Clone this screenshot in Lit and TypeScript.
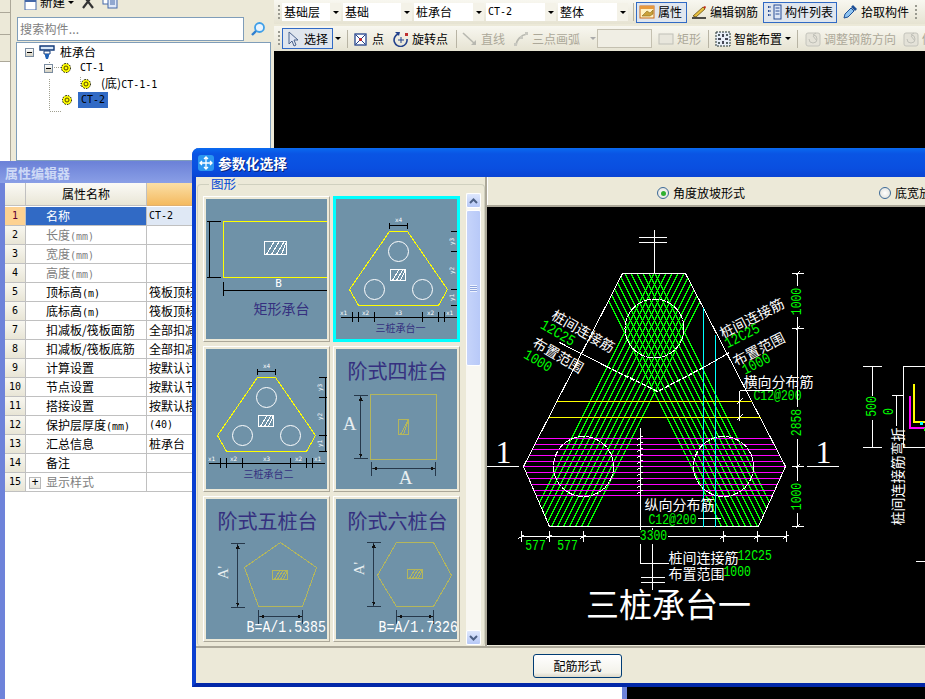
import { LitElement, html, svg, css } from 'lit';
import { customElement } from 'lit/decorators.js';

const line = (x1: number, y1: number, x2: number, y2: number, c = '#fff') =>
  svg`<line x1=${x1} y1=${y1} x2=${x2} y2=${y2} stroke=${c} />`;

// the CAD figures use a tall, narrow face, so mono text gets squeezed sideways
const label = (x: number, y: number, t: string, cls: string, size: number, rot = 0, anchor = 'middle') => {
  const narrow = cls === 'g' || cls === 'formula';
  const squeeze = narrow ? ' scale(.83 1)' : '';
  return svg`<text transform="translate(${x} ${y}) rotate(${rot})${squeeze}" class=${cls} font-size=${narrow ? size * 1.2 : size} text-anchor=${anchor} dominant-baseline="central">${t}</text>`;
};

const hatch = (x: number, y: number, w: number, h: number, c: string, step = 5) => {
  const out = [];
  for (let i = 2; i < w - 2; i += step) {
    out.push(line(x + i, y + h, Math.min(x + i + h * 0.6, x + w), y, c));
  }
  return svg`<rect x=${x} y=${y} width=${w} height=${h} fill="none" stroke=${c} />${out}`;
};

const vdim = (x: number, y1: number, y2: number, half = 7) => {
  const c = '#26384a';
  return svg`${line(x, y1, x, y2, c)}${line(x - half, y1, x + half, y1, c)}${line(x - half, y2, x + half, y2, c)}
    <polygon points="${x},${y1 + 1} ${x - 2},${y1 + 5} ${x + 2},${y1 + 5}" fill="#111" />
    <polygon points="${x},${y2 - 1} ${x - 2},${y2 - 5} ${x + 2},${y2 - 5}" fill="#111" />`;
};

const hdim = (y: number, x1: number, x2: number, half = 7) => {
  const c = '#26384a';
  return svg`${line(x1, y, x2, y, c)}${line(x1, y - half, x1, y + half, c)}${line(x2, y - half, x2, y + half, c)}
    <polygon points="${x1 + 1},${y} ${x1 + 5},${y - 2} ${x1 + 5},${y + 2}" fill="#111" />
    <polygon points="${x2 - 1},${y} ${x2 - 5},${y - 2} ${x2 - 5},${y + 2}" fill="#111" />`;
};

const OLIVE = '#b4b65c';

function threePile(name: string, dx: number, dy: number) {
  const k = '#000';
  const ticks = [16, 22, 38, 86, 102, 108];
  const names: [number, string][] = [[7, 'x1'], [29, 'x2'], [62, 'x3'], [94, 'x2'], [113, 'x1']];
  return svg`<g transform="translate(${dx} ${dy})">
    <polygon points="53,32 71,32 111,90 102,106 22,106 13,90" fill="none" stroke="#ff0" />
    <circle cx="62" cy="52" r="10" fill="none" stroke="#fff" />
    <circle cx="38" cy="90" r="10" fill="none" stroke="#fff" />
    <circle cx="86" cy="90" r="10" fill="none" stroke="#fff" />
    ${hatch(54, 70, 15, 11, '#fff', 4)}
    ${line(53, 26, 71, 26, k)}${line(53, 23, 53, 29, k)}${line(71, 23, 71, 29, k)}
    ${label(62, 20, 'x4', 'tiny', 6)}
    ${line(121, 32, 121, 106, k)}
    ${[32, 52, 90, 106].map(y => line(114, y, 122, y, k))}
    ${label(115, 42, 'y3', 'tiny', 6, -90)}${label(115, 71, 'y2', 'tiny', 6, -90)}${label(115, 98, 'y1', 'tiny', 6, -90)}
    ${line(4, 118, 120, 118, k)}
    ${ticks.map(x => line(x, 112, x, 122, k))}
    ${names.map(([x, t]) => label(x, 113, t, 'tiny', 6))}
    ${label(64, 128, name, 'ink', 10)}
  </g>`;
}

const TILES = [
  {
    sel: false,
    art: svg`
      <polyline points="122,22 17,22 17,78 122,78" fill="none" stroke="#ff0" />
      ${line(3, 22, 3, 78, '#000')}${line(0, 22, 14, 22, '#000')}${line(0, 78, 14, 78, '#000')}
      ${hatch(58, 42, 22, 13, '#fff')}
      ${label(72, 84, 'B', 'tiny', 11)}
      ${line(17, 91, 122, 91, '#000')}${line(17, 82, 17, 96, '#000')}
      ${label(75, 108, '矩形承台', 'ink', 14)}`,
  },
  { sel: true, art: threePile('三桩承台一', 0, 0) },
  { sel: false, art: threePile('三桩承台二', -2, -4) },
  {
    sel: false,
    art: svg`
      ${label(61, 21, '阶式四桩台', 'ink', 20)}
      <rect x="34" y="45" width="66" height="65" fill="none" stroke=${OLIVE} />
      ${hatch(62, 70, 10, 15, OLIVE, 3)}
      ${vdim(24, 46, 109)}${hdim(119, 35, 99)}
      ${label(13, 74, 'A', 'serif', 19)}${label(69, 128, 'A', 'serif', 19)}`,
  },
  {
    sel: false,
    art: svg`
      ${label(61, 21, '阶式五桩台', 'ink', 20)}
      <polygon points="74,43 110,68 96,107 52,107 38,68" fill="none" stroke=${OLIVE} />
      ${hatch(66, 71, 15, 9, OLIVE, 3)}
      ${vdim(31, 44, 108)}${hdim(117, 52, 96)}
      ${label(16, 73, "A'", 'serif', 15, -90)}
      ${label(40, 128, 'B=A/1.5385', 'formula', 13.3, 0, 'start')}`,
  },
  {
    sel: false,
    art: svg`
      ${label(61, 21, '阶式六桩台', 'ink', 20)}
      <polygon points="60,43 97,43 115,76 97,107 60,107 41,76" fill="none" stroke=${OLIVE} />
      ${hatch(71, 70, 15, 9, OLIVE, 3)}
      ${vdim(37, 43, 107)}${hdim(117, 60, 97)}
      ${label(22, 69, "A'", 'serif', 15, -90)}
      ${label(42, 128, 'B=A/1.7326', 'formula', 13.3, 0, 'start')}`,
  },
];

const ROWS: [string, string, boolean?, string?][] = [
  ['名称', 'CT-2'],
  ['长度', '', true, '(mm)'],
  ['宽度', '', true, '(mm)'],
  ['高度', '', true, '(mm)'],
  ['顶标高', '筏板顶标高', false, '(m)'],
  ['底标高', '筏板顶标高', false, '(m)'],
  ['扣减板/筏板面筋', '全部扣减'],
  ['扣减板/筏板底筋', '全部扣减'],
  ['计算设置', '按默认计算'],
  ['节点设置', '按默认节点'],
  ['搭接设置', '按默认搭接'],
  ['保护层厚度', '(40)', false, '(mm)'],
  ['汇总信息', '桩承台'],
  ['备注', ''],
  ['显示样式', '', true],
];

// small toolbar glyphs, all on a 16 box
const ICONS: Record<string, unknown> = {
  prop: svg`<rect x="1" y="2" width="14" height="12" fill="#fff3c4" stroke="#c96a1a" /><rect x="1" y="2" width="14" height="3" fill="#e89a3c" /><path d="M3 12l5-5 3 2 3-3v4l-3 2H3z" fill="#caa23a" stroke="#8a6a1a" stroke-width=".6" />`,
  edit: svg`<path d="M2 12L12 3l2 2L5 13z" fill="#e8c040" stroke="#665010" stroke-width=".8" /><path d="M12 3l2 2 1-2-1-1z" fill="#c03020" /><path d="M1 14h14" stroke="#222" stroke-width="1.6" />`,
  list: svg`<rect x="8" y="1" width="7" height="14" fill="#dce6f6" stroke="#2a4f96" /><path d="M9.500 4h4M9.500 7h4M9.500 10h4" stroke="#2a4f96" /><path d="M2 3h3M2 7h3M2 11h3" stroke="#2a4f96" stroke-width="2" stroke-dasharray="1.500 1" />`,
  pick: svg`<path d="M2 14l1-4 6-6 3 3-6 6z" fill="#8fc4f0" stroke="#1d4f96" /><path d="M9 3l2-2 4 4-2 2z" fill="#1d4f96" />`,
  arrow: svg`<path d="M4 1v12l3-3 2 5 2-1-2-5h4z" fill="#dfe6f4" stroke="#4c648c" />`,
  point: svg`<rect x="2" y="3" width="11" height="11" fill="#fff" stroke="#23428c" stroke-width="1.300" /><path d="M3 4l9 9M12 4l-9 9" stroke="#23428c" /><circle cx="7.500" cy="8.500" r="1.500" fill="#d02020" />`,
  rotate: svg`<path d="M14 8a6.500 6.500 0 1 1-9-5" fill="none" stroke="#23428c" stroke-width="1.600" /><path d="M2 1l5 0-1 4z" fill="#23428c" /><path d="M8 6v6M5 9h6" stroke="#23428c" /><rect x="12" y="2" width="3" height="3" fill="#c03030" />`,
  line: svg`<path d="M1 2l12 11" stroke="#b8b8b0" stroke-width="1.600" /><path d="M14 9v5H9z" fill="#b8b8b0" />`,
  arc: svg`<path d="M3 15C3 9 8 4 14 3" fill="none" stroke="#b8b8b0" stroke-width="1.600" /><rect x="1" y="12" width="3" height="3" fill="#c8c8c0" /><rect x="7" y="5" width="3" height="3" fill="#c8c8c0" /><rect x="12" y="1" width="3" height="3" fill="#c8c8c0" />`,
  rect: svg`<rect x="1" y="3" width="14" height="10" fill="#e8e6dc" stroke="#c0c0b8" />`,
  smart: svg`<rect x="1" y="1" width="14" height="14" fill="#e8eef8" stroke="#233" stroke-dasharray="2 1" /><path d="M8 3v3M8 10v3M3 8h3M10 8h3" stroke="#112" stroke-width="1.500" /><circle cx="4" cy="4" r="1" fill="#233" /><circle cx="12" cy="12" r="1" fill="#233" /><circle cx="12" cy="4" r="1" fill="#233" /><circle cx="4" cy="12" r="1" fill="#233" />`,
  adjust: svg`<rect x="1" y="2" width="14" height="13" rx="2" fill="#e4e2d8" stroke="#c4c4bc" /><path d="M4 8a4 4 0 1 0 4-4l3-2M8 5l4 5" fill="none" stroke="#c0c0b8" />`,
  newdoc: svg`<rect x="4" y="5" width="11" height="11" fill="#fff" stroke="#4468a8" /><rect x="4" y="5" width="11" height="3" fill="#4468a8" /><path d="M1 2l2 2 2-2" stroke="#e0a020" stroke-width="1.500" fill="none" />`,
  del: svg`<path d="M3 1l10 13M13 1L3 14" stroke="#333" stroke-width="2.200" />`,
  copy: svg`<rect x="1" y="0" width="9" height="10" fill="#fff" stroke="#4468a8" /><rect x="6" y="3" width="9" height="11" fill="#dfe8f8" stroke="#4468a8" /><path d="M8 6h5M8 8h5M8 10h5" stroke="#4468a8" />`,
};

const icon = (n: string) => html`<svg class="ico" viewBox="0 0 16 16" width="16" height="16">${ICONS[n]}</svg>`;

const gear = html`<svg class="gear" viewBox="0 0 12 12" width="12" height="12">
  <circle cx="6" cy="6" r="4.500" fill="#ff0" stroke="#000" stroke-dasharray="1.500 1.200" />
  <circle cx="6" cy="6" r="2" fill="none" stroke="#554400" />
</svg>`;

const expander = html`<span class="expander"></span>`;

type Tool = { i?: string; t?: string; w?: number; g?: number; on?: boolean; off?: boolean; kind?: string };

const ROW1: Tool[] = [
  { i: 'prop', t: '属性', w: 51, g: 2, on: true },
  { i: 'edit', t: '编辑钢筋', w: 70, g: 4 },
  { i: 'list', t: '构件列表', w: 74, g: 3, on: true },
  { i: 'pick', t: '拾取构件', w: 69 },
];

const ROW2: Tool[] = [
  { i: 'arrow', t: '选择', w: 51, on: true },
  { kind: 'drop', w: 10, g: 4 },
  { kind: 'sep', g: 3 },
  { i: 'point', t: '点', w: 35, g: 5 },
  { i: 'rotate', t: '旋转点', w: 58, g: 7 },
  { kind: 'sep', g: 3 },
  { i: 'line', t: '直线', w: 46, g: 5, off: true },
  { i: 'arc', t: '三点画弧', w: 78, off: true },
  { kind: 'drop-off', w: 8 },
  { kind: 'combo', w: 55, g: 4 },
  { i: 'rect', t: '矩形', w: 46, g: 6, off: true },
  { kind: 'sep', g: 4 },
  { i: 'smart', t: '智能布置', w: 70, g: 1 },
  { kind: 'drop', w: 8, g: 5 },
  { kind: 'sep', g: 5 },
  { i: 'adjust', t: '调整钢筋方向', w: 95, g: 3, off: true },
  { i: 'adjust', t: '修改', w: 50, off: true },
];

const COMBOS: [string, number][] = [['基础层', 59], ['基础', 69], ['桩承台', 70], ['CT-2', 70], ['整体', 70]];

function cadDrawing() {
  const hatchLines = [];
  for (let o = -32; o <= 32; o += 6) {
    const x = (y: number) => (y - 329) / 2 + o;
    hatchLines.push(line(654 + x(270), 270, 654 + x(530), 530, '#0f0'));
    hatchLines.push(line(654 - x(270), 270, 654 - x(530), 530, '#0f0'));
  }
  const hex = '622,274 685,274 785,467 758,527 549,527 523,467';
  const magenta = [439, 445, 450, 456, 462, 467, 473, 479, 485, 491, 496];
  const slashes = [];
  for (let y = 438; y <= 496; y += 6) slashes.push(line(637, y + 2, 643, y - 2));
  const bottom = [521, 549, 583, 723, 757, 786];
  const right = [274, 329, 467, 527];
  return svg`
    <defs><clipPath id="hex"><polygon points=${hex} /></clipPath></defs>
    <g clip-path="url(#hex)">
      ${hatchLines}
      ${magenta.map(y => line(520, y, 790, y, '#f0f'))}
    </g>
    <polygon points=${hex} fill="none" stroke="#fff" />
    <circle cx="654" cy="329" r="29.500" fill="none" stroke="#fff" stroke-dasharray="7 1" />
    <circle cx="583" cy="467" r="30" fill="none" stroke="#fff" stroke-dasharray="7 1" />
    <circle cx="723" cy="467" r="30" fill="none" stroke="#fff" stroke-dasharray="7 1" />
    ${line(556, 402, 751, 402, '#ff0')}${line(548, 418, 760, 418, '#ff0')}
    ${line(703, 308, 703, 527, '#0ff')}${line(715, 335, 715, 527, '#0ff')}

    ${line(654, 230, 654, 274)}${line(638, 238, 666, 238)}${line(638, 243, 666, 243)}
    ${line(559, 343, 606, 367)}${line(729, 353, 703, 368)}
    <polyline points="606,367 657,392 703,368" fill="none" stroke="#fff" stroke-width="1.400" stroke-dasharray="5 1.500" />

    ${label(583, 331, '桩间连接筋', 'w', 14, 30)}
    ${label(557, 334, '12C25', 'g', 12.500, 30)}
    ${label(558, 355, '布置范围', 'w', 14, 30)}
    ${label(537, 362, '1000', 'g', 12.500, 30)}
    ${label(751, 318, '桩间连接筋', 'w', 14, -27)}
    ${label(742, 337, '12C25', 'g', 12.500, -27)}
    ${label(758, 349, '布置范围', 'w', 14, -27)}
    ${label(756, 365, '1000', 'g', 12.500, -27)}

    ${label(743, 381, '横向分布筋', 'w', 14, 0, 'start')}
    ${label(753, 397, 'C12@200', 'g', 11.500, 0, 'start')}
    ${line(739, 391, 772, 391)}${line(739, 391, 739, 421)}
    ${line(736, 405, 742, 399)}${line(736, 421, 742, 415)}

    ${line(640, 428, 640, 564)}${slashes}
    ${line(640, 564, 668, 564)}${line(652, 528, 652, 590)}
    ${line(640, 578, 664, 578)}${line(640, 583, 664, 583)}
    ${label(644, 504, '纵向分布筋', 'w', 14, 0, 'start')}
    ${label(648, 521, 'C12@200', 'g', 11.500, 0, 'start')}
    ${line(697, 519, 720, 519)}
    ${label(668, 557, '桩间连接筋', 'w', 14, 0, 'start')}
    ${label(737, 557, '12C25', 'g', 11.500, 0, 'start')}
    ${label(668, 573, '布置范围', 'w', 14, 0, 'start')}
    ${label(723, 573, '1000', 'g', 11.500, 0, 'start')}

    ${line(521, 537, 786, 537)}
    ${bottom.map(x => svg`${line(x, 531, x, 542)}${line(x - 3, 539, x + 3, 535)}`)}
    <rect x="639" y="530" width="28" height="14" fill="#000" />
    ${label(653, 537, '3300', 'g', 11.500)}
    ${label(535, 547, '577', 'g', 11.500)}${label(567, 547, '577', 'g', 11.500)}

    ${line(797, 274, 797, 527)}
    ${right.map(y => svg`${line(791, y, 803, y)}${line(795, y + 2, 799, y - 2)}`)}
    <rect x="790" y="286" width="14" height="31" fill="#000" />
    <rect x="790" y="407" width="14" height="32" fill="#000" />
    <rect x="790" y="481" width="14" height="32" fill="#000" />
    ${label(797, 302, '1000', 'g', 11.500, -90)}
    ${label(797, 423, '2858', 'g', 11.500, -90)}
    ${label(797, 497, '1000', 'g', 11.500, -90)}

    ${line(486, 467, 518, 467)}${label(503, 452, '1', 'big1', 32)}
    ${line(806, 467, 838, 467)}${label(823, 452, '1', 'big1', 32)}
    ${label(668, 603, '三桩承台一', 'w', 33)}

    ${line(872, 367, 872, 448)}${line(862, 367, 881, 367)}${line(862, 448, 881, 448)}
    <rect x="865" y="396" width="14" height="24" fill="#000" />
    ${label(872, 407, '500', 'g', 11.500, -90)}
    ${label(889, 412, '0', 'g', 11.500, -90)}
    <rect x="903" y="367" width="40" height="81" fill="none" stroke="#fff" />
    <polyline points="909,396 909,428 935,428" fill="none" stroke="#f0f" stroke-width="2" />
    <polyline points="913,384 913,422 935,422" fill="none" stroke="#ff0" stroke-width="2" />
    <rect x="919" y="422" width="3" height="3" fill="#0ff" />
    <rect x="923" y="428" width="3" height="3" fill="#0f0" />
    ${line(896, 396, 896, 426)}${line(891, 396, 903, 396)}
    ${line(915, 562, 935, 562)}
    ${label(896, 477, '桩间连接筋弯折', 'w', 14, -90)}
  `;
}

@customElement('app-root')
export class AppRoot extends LitElement {
  static styles = css`
    :host {
      display: block;
      position: relative;
      width: 925px;
      height: 699px;
      overflow: hidden;
      background: #000;
      font: 12px/16px "Noto Sans CJK SC", "Liberation Sans", sans-serif;
      color: #000;
    }
    .mono { font-family: "DejaVu Sans Mono", monospace; font-size: 10px; }
    .ico { display: block; flex: none; }

    /* component browser, top left */
    .browser {
      position: absolute; left: 0; top: 0; width: 274px; height: 161px;
      background: #ece9d8; display: flex;
    }
    .strip { width: 10px; background: #fff; border-right: 1px solid #aca899; flex: none; }
    .strip div {
      height: 61px; border-bottom: 1px solid #aca899;
      background:
        linear-gradient(#aca899, #aca899) 0 12px / 100% 1px no-repeat,
        linear-gradient(#aca899, #aca899) 0 34px / 100% 1px no-repeat,
        #ece9d8;
    }
    .browser-main { margin-left: 5px; width: 255px; display: flex; flex-direction: column; }
    .mini {
      height: 15px; flex: none; box-sizing: border-box; display: flex; align-items: flex-end; overflow: hidden;
      padding: 0 0 5px 5px;
    }
    .mini .cell { height: 16px; display: flex; flex: none; }
    .mini .new { width: 59px; gap: 3px; font-size: 12.500px; }
    .mdrop { margin: 7px 0 0 0; }
    .mini .del { width: 22px; }
    .search { height: 24px; flex: none; display: flex; margin-left: 1px; margin-top: 2px; }
    .search .box {
      width: 227px; box-sizing: border-box; border: 1px solid #7f9db9; background: #fff;
      color: #808080; padding: 3px 2px; line-height: 16px; letter-spacing: .2px;
    }
    .search .go { flex: 1; display: flex; align-items: center; justify-content: center; background: #ece9d8; }
    .tree {
      flex: 1; margin-top: 1px; position: relative; background: #fff;
      border: 1px solid #7f9db9; padding-top: 1px;
    }
    .links { position: absolute; left: 0; top: 0; }
    .node { height: 16px; display: flex; align-items: center; position: relative; }
    .n0 { padding-left: 8px; }
    .n1 { padding-left: 27px; }
    .n2 { padding-left: 63px; }
    .n1b { padding-left: 44px; }
    .expander {
      width: 7px; height: 7px; border: 1px solid #7a8ca0; background: linear-gradient(#fff, #d4d0c0);
      display: block; position: relative; flex: none; margin-right: 7px;
    }
    .expander::after { content: ''; position: absolute; left: 1px; right: 1px; top: 3px; height: 1px; background: #000; }
    .n0 .expander { margin-right: 5px; }
    .n0 .ico { margin-right: 5px; }
    .n1 .expander { margin-right: 7px; }
    .gear { flex: none; margin-right: 8px; }
    .n2 .gear { margin-right: 9px; }
    .n1b .gear { margin-right: 5px; }
    .picked { background: #316ac5; height: 16px; padding: 0 3px; line-height: 16px; }

    /* toolbars */
    .bars {
      position: absolute; left: 274px; top: 0; right: 0; height: 51px; background: #ece9d8;
      display: flex; flex-direction: column; gap: 2px;
    }
    .bar {
      height: 24px; display: flex; align-items: center; padding-left: 8px;
      background: linear-gradient(#f8f7f0, #e6e3d2);
    }
    .bar.two { height: 25px; }
    .bar::before {
      content: ''; position: absolute; left: 4px; width: 2px; height: 15px;
      background: repeating-linear-gradient(#9a9a90 0 2px, transparent 2px 4px);
    }
    .combo {
      height: 18px; background: #fff; display: flex; align-items: center; box-sizing: border-box;
      padding-left: 2px; flex: none; margin-right: 2px; justify-content: space-between;
    }
    .combo .arr {
      width: 11px; height: 18px; background: #f4f2e8; display: flex; align-items: center; justify-content: center;
    }
    .tri { width: 0; height: 0; border: 3px solid transparent; border-top: 3px solid #000; border-bottom: 0; display: block; }
    .tri.dim { border-top-color: #aaa; }
    .sep { width: 1px; height: 18px; background: #b8b4a4; flex: none; }
    .tool {
      height: 21px; box-sizing: border-box; display: flex; align-items: center; gap: 3px; flex: none;
      padding-left: 2px; white-space: nowrap; overflow: hidden;
    }
    .tool.on { border: 1px solid #316ac5; background: #e0e6ee; }
    .tool.off { color: #aca899; }
    .drop { height: 21px; display: flex; align-items: center; justify-content: center; flex: none; }
    .blank { height: 19px; border: 1px solid #c4c0b0; background: #f0eee4; box-sizing: border-box; flex: none; }
    .grip { width: 2px; height: 15px; margin-left: 6px; background: repeating-linear-gradient(#9a9a90 0 2px, transparent 2px 4px); }

    /* property window */
    .props {
      position: absolute; left: 0; top: 161px; width: 627px; height: 538px; box-sizing: border-box;
      background: #fff; border: solid #6e83da; border-width: 1px 5px 0 5px;
      display: flex; flex-direction: column;
    }
    .props-title {
      margin: 0 -5px; padding-left: 5px; height: 21px; flex: none; line-height: 21px;
      background: linear-gradient(#6c82d8, #8a9fe6); color: #cdd9f6; font-weight: 700; font-size: 13px;
    }
    .grid { display: grid; grid-template-columns: 21px 121px 1fr; grid-auto-rows: 19px; width: 450px; }
    .grid > div {
      box-sizing: border-box; border: solid #c0c0c0; border-width: 0 1px 1px 0; line-height: 18px;
      white-space: nowrap; overflow: hidden;
    }
    .grid .hd {
      height: 23px; grid-row: 1; background: linear-gradient(#fbfaf6, #e9e6d6); text-align: center; line-height: 22px;
    }
    .grid { grid-template-rows: 24px; }
    .grid .hd.orange { background: linear-gradient(#fbdfa6, #f4ba60); border-color: #e0b070; }
    .grid .num {
      text-align: center; background: linear-gradient(#f8f7f0, #e8e5d6);
      font-family: "DejaVu Sans Mono", monospace; font-size: 10px;
    }
    .grid .num.cur { background: #fdd292; color: #600030; }
    .grid .name { padding-left: 20px; position: relative; }
    .grid .name.cur { background: #316ac5; color: #fff; }
    .grid .name.dim { color: #808080; }
    .grid .val { padding-left: 2px; }
    .grid .val.cur { background: #dfe8f5; }
    .plus {
      position: absolute; left: 3px; top: 4px; width: 10px; height: 10px; border: 1px solid #b8b8b8;
      background: linear-gradient(#fff, #e4e2d8); font: 12px/10px "Liberation Mono", monospace;
      text-align: center; color: #000;
    }

    /* dialog */
    .dialog {
      position: absolute; left: 192px; top: 148px; width: 780px; height: 539px; box-sizing: border-box;
      border: solid #0a3fd0; border-width: 0 4px 4px 4px; border-bottom-color: #0228a8;
      border-radius: 7px 7px 0 0; background: #ece9d8; display: flex; flex-direction: column;
    }
    .dlg-title {
      margin: 0 -4px; height: 29px; flex: none; display: flex; align-items: center; gap: 4px; padding-left: 6px;
      border-radius: 7px 7px 0 0; background: linear-gradient(#0a6af0 0, #0a55e4 20%, #0a4fe0 70%, #0a44d4 100%);
      color: #fff; font-weight: 700; font-size: 13.800px; text-shadow: 1px 1px 0 #06237a;
    }
    .dlg-ico {
      width: 16px; height: 16px; border-radius: 3px; background: #2b96f0; display: flex; flex: none;
    }
    .dlg-body { height: 469px; flex: none; display: flex; }
    .left { width: 289px; flex: none; padding: 1px 0 0 1px; box-sizing: border-box; }
    fieldset {
      margin: 0; padding: 3px 0 0 5px; border: 1px solid #d0d0bf; border-radius: 4px; border-bottom: 0;
      height: 468px; box-sizing: border-box; width: 288px; display: flex;
    }
    legend { margin-left: 6px; padding: 0 2px; color: #0046d5; line-height: 12px; height: 12px; font-size: 12.500px; }
    .scroller { display: flex; height: 452px; }
    .tiles { display: grid; grid-template-columns: 127px 127px; grid-auto-rows: 146px; gap: 4px 3px; padding-top: 3px; }
    .tile {
      box-sizing: border-box; background: #ece9d8; padding: 2px;
      border: 1px solid; border-color: #fff #aca899 #aca899 #fff; overflow: hidden;
    }
    .tile.sel { border: 3px solid #0ff; padding: 0; }
    .tile svg { display: block; background: #6f92a8; }
    .tile svg line, .tile svg polygon, .tile svg polyline, .tile svg rect { shape-rendering: crispEdges; }
    .tiny { fill: #fff; font-family: "DejaVu Sans Mono", monospace; }
    .ink { fill: #35307f; font-family: "Noto Sans CJK SC", sans-serif; }
    .serif { fill: #e8eef0; font-family: "Liberation Serif", serif; }
    .formula { fill: #fff; font-family: "Liberation Mono", monospace; }
    .sbar {
      width: 15px; margin-left: 6px; flex: none; display: flex; flex-direction: column; gap: 2px;
      background: #f8f7f1;
    }
    .sbtn {
      height: 15px; flex: none; box-sizing: border-box; border: 1px solid #fff; border-radius: 2px;
      background: linear-gradient(#dfe8fd, #b6c8f6); display: flex; align-items: center; justify-content: center;
    }
    .thumb {
      height: 156px; flex: none; box-sizing: border-box; border: 1px solid #fff; border-radius: 2px;
      background: linear-gradient(90deg, #c6d4fa, #b8c9f8); display: flex; align-items: center; justify-content: center;
    }
    .thumb i { display: block; width: 7px; height: 7px; background: repeating-linear-gradient(#eef3ff 0 1px, #8ea4dc 1px 2px); }
    .track { flex: 1; }
    .right { flex: 1; display: flex; flex-direction: column; border-left: 2px solid #aca899; box-shadow: inset 1px 0 0 #fff; }
    .radios {
      height: 30px; flex: none; box-sizing: border-box; border-bottom: 2px solid #aca899; display: flex;
      align-items: center; padding-left: 170px; padding-top: 4px;
    }
    .radio { display: flex; align-items: center; gap: 4px; flex: none; width: 222px; }
    .radio i {
      display: block; width: 12px; height: 12px; box-sizing: border-box; border-radius: 50%;
      border: 1px solid #3d6a98; background: radial-gradient(#fff, #dcdcd4); flex: none; position: relative;
    }
    .radio.on i::after {
      content: ''; position: absolute; left: 2.500px; top: 2.500px; width: 5px; height: 5px; border-radius: 50%; background: #30b030;
    }
    .cad { display: block; background: #000; flex: none; }
    .cad line, .cad polyline, .cad polygon, .cad circle, .cad rect { shape-rendering: crispEdges; }
    .cad .w { fill: #fff; font-family: "Noto Sans CJK SC", sans-serif; }
    .cad .g { fill: #0f0; font-family: "Liberation Mono", monospace; }
    .cad .big1 { fill: #fff; font-family: "Liberation Serif", serif; }
    .dlg-foot {
      flex: 1; border-top: 2px solid #aca899; display: flex; align-items: center;
      padding-left: 337px;
    }
    .dlg-foot button {
      width: 89px; height: 24px; padding: 0; border: 1px solid #003c74; border-radius: 3px;
      background: linear-gradient(#fff, #f3f2ea 80%, #dcd8c8); font: inherit; color: #000;
    }
  `;

  private renderTool(t: Tool) {
    const gap = t.g ? `margin-right:${t.g}px;` : '';
    if (t.kind === 'sep') return html`<span class="sep" style=${gap}></span>`;
    if (t.kind === 'drop' || t.kind === 'drop-off') {
      return html`<span class="drop" style="width:${t.w}px;${gap}"><span class="tri ${t.kind === 'drop-off' ? 'dim' : ''}"></span></span>`;
    }
    if (t.kind === 'combo') return html`<span class="blank" style="width:${t.w}px;${gap}"></span>`;
    return html`<div class="tool ${t.on ? 'on' : ''} ${t.off ? 'off' : ''}" style="width:${t.w}px;${gap}">
      ${icon(t.i!)}<span>${t.t}</span>
    </div>`;
  }

  private renderBrowser() {
    return html`<div class="browser">
      <div class="strip"><div></div></div>
      <div class="browser-main">
        <div class="mini">
          <div class="cell new">${icon('newdoc')}<span>新建</span><span class="mdrop"><span class="tri"></span></span></div>
          <div class="cell del">${icon('del')}</div>
          <div class="cell">${icon('copy')}</div>
        </div>
        <div class="search">
          <div class="box">搜索构件...</div>
          <div class="go">
            <svg viewBox="0 0 16 16" width="16" height="16">
              <circle cx="9.500" cy="6.500" r="4.500" fill="#e8f4ff" stroke="#3f9fe8" stroke-width="1.800" />
              <path d="M6 10l-4 4" stroke="#2f7fd0" stroke-width="2.400" />
            </svg>
          </div>
        </div>
        <div class="tree">
          <svg class="links" width="120" height="70">
            <path d="M32.500 19v8M32.500 36v32H44M37 24.500h8M63 34v9h7" fill="none" stroke="#a0a090" stroke-dasharray="1 1" shape-rendering="crispEdges" />
          </svg>
          <div class="node n0">${expander}<svg class="ico" viewBox="0 0 16 16" width="16" height="16">
            <path d="M1 2h14v4H1z" fill="#d8e8f8" stroke="#123a78" stroke-width="1.400" /><path d="M5 7h6v3H5z" fill="#fff" stroke="#123a78" /><path d="M6 10h4v2l-1 3H7l-1-3z" fill="#1f62b8" />
          </svg><span>桩承台</span></div>
          <div class="node n1">${expander}${gear}<span class="mono">CT-1</span></div>
          <div class="node n2">${gear}<span>(底)<span class="mono">CT-1-1</span></span></div>
          <div class="node n1b">${gear}<span class="picked mono">CT-2</span></div>
        </div>
      </div>
    </div>`;
  }

  private renderBars() {
    return html`<div class="bars">
      <div class="bar">
        ${COMBOS.map(([t, w], i) => html`<div class="combo" style="width:${w}px">
          <span class=${i === 3 ? 'mono' : ''}>${t}</span><span class="arr"><span class="tri"></span></span>
        </div>`)}
        <span class="sep" style="margin:0 2px 0 3px"></span>
        ${ROW1.map(t => this.renderTool(t))}
        <span class="grip"></span>
      </div>
      <div class="bar two">${ROW2.map(t => this.renderTool(t))}</div>
    </div>`;
  }

  private renderProps() {
    return html`<div class="props">
      <div class="props-title">属性编辑器</div>
      <div class="grid">
        <div class="hd"></div><div class="hd">属性名称</div><div class="hd orange"></div>
        ${ROWS.map(([name, val, dim, unit], i) => html`
          <div class="num ${i === 0 ? 'cur' : ''}">${i + 1}</div>
          <div class="name ${i === 0 ? 'cur' : ''} ${dim ? 'dim' : ''}">
            ${i === 14 ? html`<span class="plus">+</span>` : ''}${name}${unit ? html`<span class="mono">${unit}</span>` : ''}
          </div>
          <div class="val ${i === 0 ? 'cur' : ''} ${/^[A-Z(]/.test(val) ? 'mono' : ''}">${val}</div>
        `)}
      </div>
    </div>`;
  }

  private renderDialog() {
    return html`<div class="dialog">
      <div class="dlg-title">
        <span class="dlg-ico"><svg viewBox="0 0 16 16" width="16" height="16">
          <path d="M8 2v12M2 8h12M6 4l2-2 2 2M6 12l2 2 2-2M4 6L2 8l2 2M12 6l2 2-2 2" fill="none" stroke="#fff" stroke-width="1.300" />
        </svg></span>
        参数化选择
      </div>
      <div class="dlg-body">
        <div class="left">
          <fieldset>
            <legend>图形</legend>
            <div class="scroller">
              <div class="tiles">
                ${TILES.map(t => html`<div class="tile ${t.sel ? 'sel' : ''}">
                  <svg viewBox="0 0 121 140" width="121" height="140"><g transform="translate(.5 .5)">${t.art}</g></svg>
                </div>`)}
              </div>
              <div class="sbar">
                <div class="sbtn"><svg width="9" height="6" viewBox="0 0 9 6"><path d="M1 5l3.500-3.500L8 5" fill="none" stroke="#4d6185" stroke-width="2" /></svg></div>
                <div class="thumb"><i></i></div>
                <div class="track"></div>
                <div class="sbtn"><svg width="9" height="6" viewBox="0 0 9 6"><path d="M1 1l3.500 3.500L8 1" fill="none" stroke="#4d6185" stroke-width="2" /></svg></div>
              </div>
            </div>
          </fieldset>
        </div>
        <div class="right">
          <div class="radios">
            <div class="radio on"><i></i><span>角度放坡形式</span></div>
            <div class="radio"><i></i><span>底宽放坡形式</span></div>
          </div>
          <svg class="cad" viewBox="487 208 460 438" width="460" height="438"><g transform="translate(.5 .5)">${cadDrawing()}</g></svg>
        </div>
      </div>
      <div class="dlg-foot"><button>配筋形式</button></div>
    </div>`;
  }

  render() {
    return html`
      ${this.renderBrowser()}
      ${this.renderBars()}
      ${this.renderProps()}
      ${this.renderDialog()}
    `;
  }
}
